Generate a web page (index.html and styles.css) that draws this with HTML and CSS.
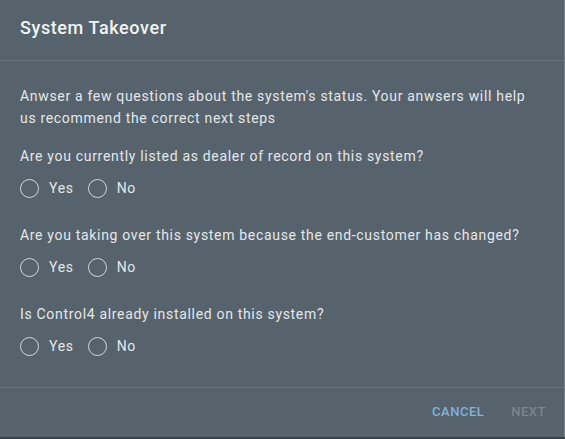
FILE: index.html
```html
<!DOCTYPE html>
<html>
<head>
<meta charset="utf-8">
<link rel="stylesheet" href="styles.css">
</head>
<body>
<div class="dialog">
  <div class="header">
    <h1 class="title">System Takeover</h1>
  </div>
  <div class="content">
    <p class="intro">Anwser a few questions about the system's status. Your anwsers will help us recommend the correct next steps</p>
    <div class="group">
      <div class="question">Are you currently listed as dealer of record on this system?</div>
      <div class="options">
        <label class="option"><span class="ring"></span><span class="label">Yes</span></label>
        <label class="option"><span class="ring"></span><span class="label">No</span></label>
      </div>
    </div>
    <div class="group">
      <div class="question">Are you taking over this system because the end-customer has changed?</div>
      <div class="options">
        <label class="option"><span class="ring"></span><span class="label">Yes</span></label>
        <label class="option"><span class="ring"></span><span class="label">No</span></label>
      </div>
    </div>
    <div class="group">
      <div class="question">Is Control4 already installed on this system?</div>
      <div class="options">
        <label class="option"><span class="ring"></span><span class="label">Yes</span></label>
        <label class="option"><span class="ring"></span><span class="label">No</span></label>
      </div>
    </div>
  </div>
  <div class="footer">
    <button class="btn btn-cancel">Cancel</button>
    <button class="btn btn-next" disabled>Next</button>
  </div>
</div>
</body>
</html>
```

FILE: styles.css
```css
html, body {
  margin: 0;
  padding: 0;
}
body {
  background: #3a4349;
  width: 565px;
  height: 439px;
  overflow: hidden;
  font-family: Roboto, "Noto Sans", "Liberation Sans", sans-serif;
}
.dialog {
  background: #57636c;
  height: 437px;
  display: flex;
  flex-direction: column;
  border-right: 1px solid #7b858c;
  box-sizing: border-box;
}
.header {
  height: 61px;
  box-sizing: border-box;
  padding: 17px 20px 0;
  border-bottom: 1px solid #67727a;
}
.title {
  margin: 0;
  font-size: 18px;
  line-height: 22px;
  font-weight: 500;
  letter-spacing: 0.6px;
  color: #f1f3f4;
}
.content {
  padding: 24px 29px 29px 20px;
  border-bottom: 1px solid #67727a;
  color: #e4e7e9;
  font-size: 14px;
  line-height: 22px;
  letter-spacing: 0.68px;
}
.intro {
  margin: 0 0 16px;
}
.group + .group {
  margin-top: 24px;
}
.question {
  height: 22px;
}
.options {
  display: flex;
  gap: 14px;
  margin-top: 9px;
  height: 24px;
  align-items: center;
}
.option {
  display: flex;
  align-items: center;
  gap: 10px;
}
.ring {
  width: 19px;
  height: 19px;
  border: 1.6px solid #d3d7da;
  border-radius: 50%;
  box-sizing: border-box;
}
.label {
  color: #e4e7e9;
  font-size: 14px;
}
.footer {
  flex: 1;
  display: flex;
  justify-content: flex-end;
  align-items: center;
  gap: 27px;
  padding: 0 18px 1px;
}
.btn {
  background: none;
  border: none;
  padding: 0;
  font-family: inherit;
  font-size: 13px;
  font-weight: 500;
  text-transform: uppercase;
  letter-spacing: 0.5px;
  line-height: 20px;
}
.btn-cancel {
  color: #7db4e0;
}
.btn-next {
  color: #7a858d;
}
```
